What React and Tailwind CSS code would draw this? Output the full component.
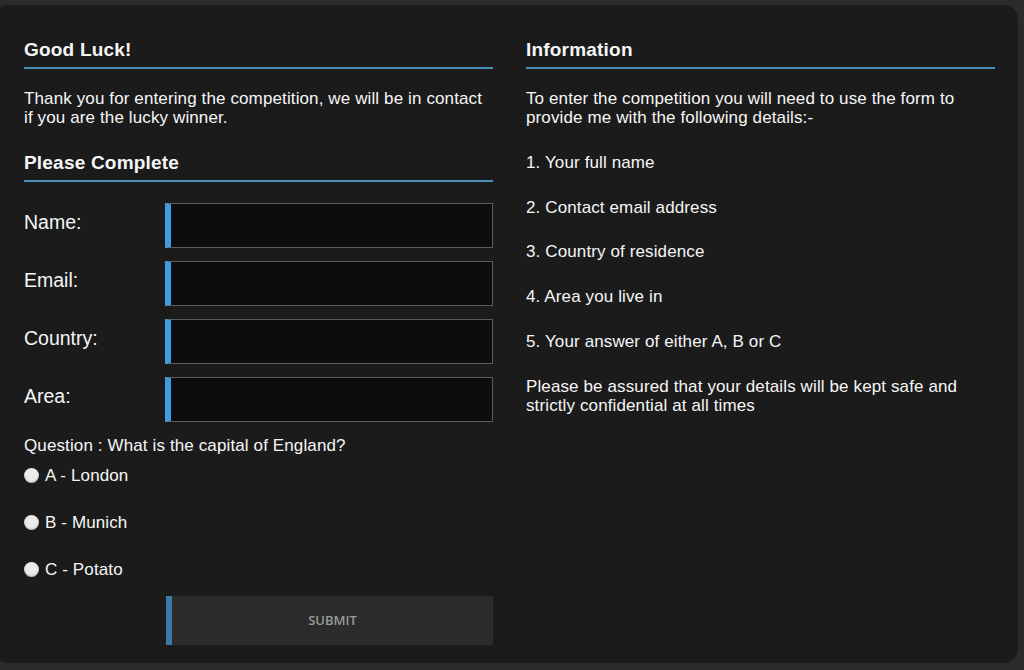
export default function App() {
    const fields = ["Name:", "Email:", "Country:", "Area:"];
    const answers = ["A - London", "B - Munich", "C - Potato"];
    const details = [
        "1. Your full name",
        "2. Contact email address",
        "3. Country of residence",
        "4. Area you live in",
        "5. Your answer of either A, B or C",
    ];

    return (
        <div
            className="h-[670px] overflow-hidden bg-[#2b2b2b] pt-[5px] text-[#f6f6f6]"
            style={{ fontFamily: '"Liberation Sans", Arial, sans-serif' }}
        >
            <div className="-ml-[6px] w-[1024px] h-[658px] rounded-[14px] bg-[#1b1b1b] pl-[30px] pr-[23px] pt-[34px] grid grid-cols-2 gap-x-[33px] items-start">
                {/* left column */}
                <div className="flex flex-col">
                    <h2 className="text-[19px] tracking-[0.2px] font-bold leading-[22px] pb-[6px] border-b-2 border-[#4a8db5]">
                        Good Luck!
                    </h2>
                    <p className="mt-[20px] text-[17px] tracking-[0.12px] leading-[19px]">
                        Thank you for entering the competition, we will be in contact
                        <br />
                        if you are the lucky winner.
                    </p>
                    <h2 className="mt-[25px] text-[19px] tracking-[0.2px] font-bold leading-[22px] pb-[6px] border-b-2 border-[#4a8db5]">
                        Please Complete
                    </h2>
                    <form className="mt-[21px] flex flex-col gap-[13px]" onSubmit={(e) => e.preventDefault()}>
                        {fields.map((f) => (
                            <label key={f} className="flex items-center">
                                <span className="w-[141px] pb-[8px] text-[19.5px] leading-[22px]">{f}</span>
                                <input
                                    type="text"
                                    className="flex-1 h-[45px] bg-[#0d0d0d] border border-[#5b5b5b] border-l-[6px] border-l-[#3e9de0] outline-none text-white px-2"
                                />
                            </label>
                        ))}
                    </form>
                    <p className="mt-[14px] text-[17px] tracking-[0.12px] leading-[19px]">
                        Question : What is the capital of England?
                    </p>
                    <div className="mt-[11px] flex flex-col gap-[28px]">
                        {answers.map((a) => (
                            <label key={a} className="flex items-center gap-[6px] text-[17px] tracking-[0.12px] leading-[19px]">
                                <span className="w-[15px] h-[15px] rounded-full bg-[#ececec] shadow-[inset_0_-1px_2px_rgba(0,0,0,0.25)]" />
                                {a}
                            </label>
                        ))}
                    </div>
                    <button
                        type="button"
                        className="mt-[17px] ml-[142px] h-[49px] bg-[#2b2b2b] border-l-[6px] border-[#3a7aa6] text-[#9a9a9a] text-[13px] font-semibold"
                        style={{ fontFamily: '"Open Sans", sans-serif' }}
                    >
                        SUBMIT
                    </button>
                </div>

                {/* right column */}
                <div className="flex flex-col">
                    <h2 className="text-[19px] tracking-[0.2px] font-bold leading-[22px] pb-[6px] border-b-2 border-[#4a8db5]">
                        Information
                    </h2>
                    <div className="mt-[20px] flex flex-col gap-[25.75px] text-[17px] tracking-[0.12px] leading-[19px]">
                        <p>
                            To enter the competition you will need to use the form to
                            <br />
                            provide me with the following details:-
                        </p>
                        {details.map((d) => (
                            <p key={d}>{d}</p>
                        ))}
                        <p>
                            Please be assured that your details will be kept safe and
                            <br />
                            strictly confidential at all times
                        </p>
                    </div>
                </div>
            </div>
        </div>
    );
}
